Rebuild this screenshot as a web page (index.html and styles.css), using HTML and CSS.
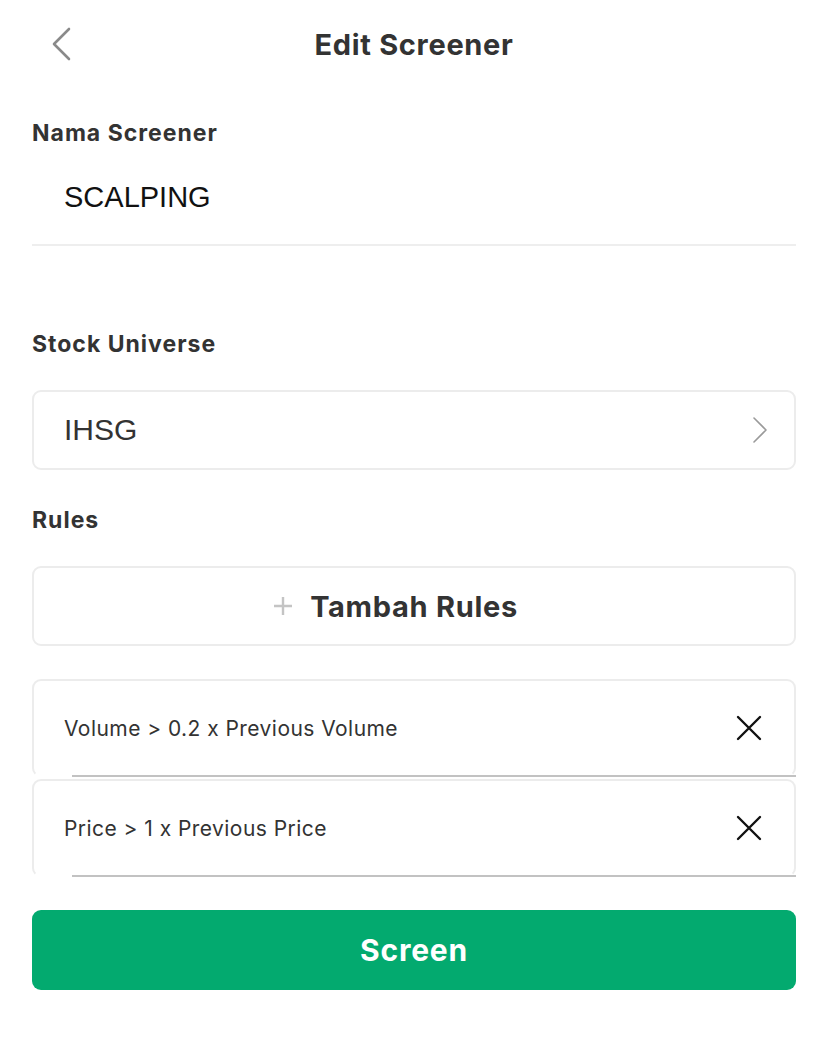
FILE: index.html
```html
<!DOCTYPE html>
<html lang="id">
<head>
<meta charset="utf-8">
<title>Edit Screener</title>
<link rel="stylesheet" href="styles.css">
</head>
<body>
<div class="page">
  <header class="topbar">
    <button class="back" aria-label="Kembali">
      <svg width="22" height="34" viewBox="0 0 22 34"><path d="M19 2 L4 17 L19 32" fill="none" stroke="#8a8a8a" stroke-width="2.6" stroke-linecap="round" stroke-linejoin="round"/></svg>
    </button>
    <h1 class="title">Edit Screener</h1>
  </header>

  <section class="field">
    <div class="label">Nama Screener</div>
    <div class="name-input">SCALPING</div>
  </section>

  <section class="universe">
    <div class="label">Stock Universe</div>
    <div class="card select">
      <span class="select-text">IHSG</span>
      <svg class="chev" width="16" height="28" viewBox="0 0 16 28"><path d="M2 2 L14 14 L2 26" fill="none" stroke="#9a9a9a" stroke-width="1.6" stroke-linecap="round" stroke-linejoin="round"/></svg>
    </div>
  </section>

  <section class="rules">
    <div class="label">Rules</div>
    <div class="card add">
      <svg class="plus" width="20" height="20" viewBox="0 0 20 20"><path d="M10 1 V19 M1 10 H19" stroke="#c4c4c4" stroke-width="2.4"/></svg>
      <span class="add-text">Tambah Rules</span>
    </div>
    <div class="rule-list">
      <div class="card rule">
        <span class="rule-text">Volume &gt; 0.2 x Previous Volume</span>
        <svg class="close" width="26" height="26" viewBox="0 0 26 26"><path d="M2 2 L24 24 M24 2 L2 24" stroke="#111" stroke-width="2.4" stroke-linecap="round"/></svg>
      </div>
      <div class="card rule">
        <span class="rule-text">Price &gt; 1 x Previous Price</span>
        <svg class="close" width="26" height="26" viewBox="0 0 26 26"><path d="M2 2 L24 24 M24 2 L2 24" stroke="#111" stroke-width="2.4" stroke-linecap="round"/></svg>
      </div>
    </div>
  </section>

  <button class="screen-btn">Screen</button>
</div>
</body>
</html>
```
FILE: styles.css
```css
* { box-sizing: border-box; }
html, body { margin: 0; padding: 0; background: #fff; }
body {
  font-family: Inter, "Noto Sans", "Liberation Sans", sans-serif;
  color: #333;
}
.page {
  width: 828px;
  padding: 0 32px;
}
.topbar {
  height: 88px;
  display: flex;
  align-items: center;
  justify-content: center;
  position: relative;
}
.back {
  position: absolute;
  left: 18px;
  top: 27px;
  border: 0;
  background: none;
  padding: 0;
  display: flex;
}
.title {
  margin: 0;
  font-size: 29px;
  font-weight: 700;
  color: #333;
  letter-spacing: 0.7px;
}
.label {
  font-size: 23px;
  font-weight: 700;
  color: #333;
  line-height: 26px;
  letter-spacing: 1px;
}
.field { padding-top: 32px; }
.name-input {
  margin-top: 35px;
  padding-left: 32px;
  font-family: "Liberation Sans", Arial, sans-serif;
  font-size: 29px;
  line-height: 32px;
  color: #111;
  padding-bottom: 31px;
  border-bottom: 2px solid #eeeeee;
}
.universe { padding-top: 85px; }
.card {
  border: 2px solid #ececec;
  border-radius: 9px;
  background: #fff;
}
.select {
  margin-top: 33px;
  height: 80px;
  display: flex;
  align-items: center;
  justify-content: space-between;
  padding: 0 26px 0 30px;
}
.select-text {
  font-family: "Liberation Sans", Arial, sans-serif;
  font-size: 30px;
  color: #333;
}
.rules { padding-top: 37px; }
.add {
  margin-top: 33px;
  height: 80px;
  display: flex;
  align-items: center;
  justify-content: center;
  gap: 17px;
}
.plus { margin-left: -37px; }
.add-text {
  font-size: 29px;
  font-weight: 700;
  color: #333;
  letter-spacing: 0.7px;
}
.rule-list {
  margin-top: 33px;
  display: flex;
  flex-direction: column;
  gap: 2px;
}
.rule {
  height: 98px;
  display: flex;
  align-items: center;
  justify-content: space-between;
  padding: 0 32px 0 30px;
  position: relative;
  border-bottom-color: transparent;
}
.rule::after {
  content: "";
  position: absolute;
  left: 38px;
  right: -2px;
  bottom: -2px;
  height: 2px;
  background: #c2c2c2;
}
.rule-text {
  font-size: 21px;
  color: #333;
  letter-spacing: 0.45px;
}
.screen-btn {
  display: block;
  width: 100%;
  margin-top: 33px;
  height: 80px;
  border: 0;
  border-radius: 9px;
  background: #03aa6f;
  color: #fff;
  font-family: Inter, "Noto Sans", sans-serif;
  font-size: 30px;
  font-weight: 700;
  letter-spacing: 0.8px;
}
```
